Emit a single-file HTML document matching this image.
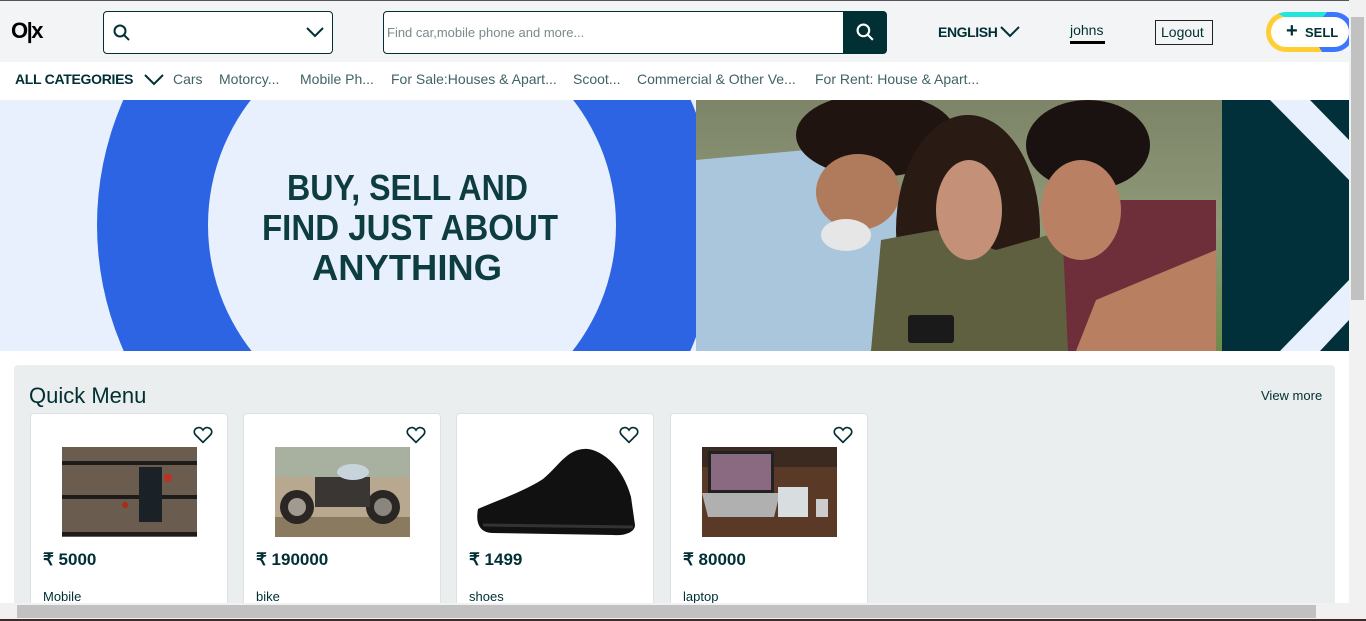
<!DOCTYPE html>
<html><head><meta charset="utf-8"><style>
*{box-sizing:border-box;margin:0;padding:0}
body{width:1366px;height:621px;overflow:hidden;background:#fff;font-family:"Liberation Sans",sans-serif;position:relative;color:#002f34}
.abs{position:absolute}
#hdr{left:0;top:0;width:1349px;height:62px;background:#f2f4f5;border-top:1px solid #555}
.ta{font-size:14px;color:#002f34}
.card{position:absolute;top:413px;width:198px;height:200px;background:#fff;border:1px solid #dde1e2;border-radius:4px}
.card .price{position:absolute;left:12px;top:136px;font-size:17px;font-weight:bold;color:#002f34}
.card .nm{position:absolute;left:12px;top:175px;font-size:13px;color:#002f34}
.card svg.h{position:absolute;right:14px;top:12px}
.card .img{position:absolute;left:31px;top:33px;width:135px;height:90px}
</style></head><body>
<div id="hdr" class="abs">
  <div class="abs" style="left:11px;top:17px;font-weight:900;font-size:22px;letter-spacing:-1.5px;color:#000">O|x</div>
  <div class="abs" style="left:103px;top:10px;width:230px;height:43px;border:1px solid #002f34;border-radius:4px;background:#fff">
    <svg class="abs" style="left:9px;top:12px" width="18" height="18" viewBox="0 0 18 18"><circle cx="7" cy="7" r="5.5" fill="none" stroke="#002f34" stroke-width="2"/><line x1="11" y1="11" x2="16" y2="16" stroke="#002f34" stroke-width="2"/></svg>
    <svg class="abs" style="left:202px;top:14px" width="18" height="12" viewBox="0 0 18 12"><path d="M1 2 L9 10 L17 2" fill="none" stroke="#002f34" stroke-width="2"/></svg>
  </div>
  <div class="abs" style="left:383px;top:10px;width:461px;height:43px;border:1px solid #002f34;border-radius:4px 0 0 4px;background:#fff;font-size:13px;color:#7a8a8c;padding:13px 3px">Find car,mobile phone and more...</div>
  <div class="abs" style="left:843px;top:10px;width:44px;height:43px;background:#002f34;border-radius:0 4px 4px 0">
    <svg class="abs" style="left:13px;top:12px" width="19" height="19" viewBox="0 0 18 18"><circle cx="7" cy="7" r="5.5" fill="none" stroke="#fff" stroke-width="2"/><line x1="11" y1="11" x2="16" y2="16" stroke="#fff" stroke-width="2"/></svg>
  </div>
  <div class="abs" style="left:938px;top:23px;font-size:14px;font-weight:bold;letter-spacing:-0.4px">ENGLISH</div>
  <svg class="abs" style="left:1000px;top:24px" width="20" height="13" viewBox="0 0 20 13"><path d="M1 2 L10 11 L19 2" fill="none" stroke="#002f34" stroke-width="2"/></svg>
  <div class="abs" style="left:1070px;top:21px;font-size:14px;color:#002f34">johns</div>
  <div class="abs" style="left:1070px;top:40px;width:35px;height:3px;background:#000"></div>
  <div class="abs" style="left:1155px;top:19px;width:58px;height:25px;border:1px solid #222;font-size:14px;padding:3px 5px">Logout</div>
  <div class="abs" style="left:1266px;top:11px;width:88px;height:40px;border-radius:20px;background:conic-gradient(from 300deg,#23e5db 0 28%,#3a77ff 28% 58%,#ffce32 58% 100%)"></div>
  <div class="abs" style="left:1271px;top:16px;width:78px;height:30px;border-radius:15px;background:#fff"></div>
  <div class="abs" style="left:1286px;top:19px;font-size:20px;font-weight:bold">+</div>
  <div class="abs" style="left:1305px;top:24px;font-size:13px;font-weight:bold">SELL</div>
</div>
<div class="abs" style="left:15px;top:71px;font-size:14px;font-weight:bold;letter-spacing:-0.3px">ALL CATEGORIES</div>
<svg class="abs" style="left:144px;top:73px" width="20" height="13" viewBox="0 0 20 13"><path d="M1 2 L10 11 L19 2" fill="none" stroke="#002f34" stroke-width="2"/></svg>
<div class="abs ta" style="left:173px;top:71px;color:#406367">Cars</div>
<div class="abs ta" style="left:219px;top:71px;color:#406367">Motorcy...</div>
<div class="abs ta" style="left:300px;top:71px;color:#406367">Mobile Ph...</div>
<div class="abs ta" style="left:391px;top:71px;color:#406367">For Sale:Houses &amp; Apart...</div>
<div class="abs ta" style="left:573px;top:71px;color:#406367">Scoot...</div>
<div class="abs ta" style="left:637px;top:71px;color:#406367">Commercial &amp; Other Ve...</div>
<div class="abs ta" style="left:815px;top:71px;color:#406367">For Rent: House &amp; Apart...</div>

<svg class="abs" style="left:0;top:100px" width="1349" height="251" viewBox="0 0 1349 251">
  <rect width="696" height="251" fill="#e8f0fd"/>
  <circle cx="407" cy="125" r="310" fill="#2c64e3"/>
  <circle cx="412" cy="125" r="204" fill="#e8f0fd"/>
  <g font-family="Liberation Sans" font-weight="900" fill="#0d3d40" font-size="36">
    <text x="287" y="100" textLength="241" lengthAdjust="spacingAndGlyphs">BUY, SELL AND</text>
    <text x="262" y="140" textLength="296" lengthAdjust="spacingAndGlyphs">FIND JUST ABOUT</text>
    <text x="312" y="180" textLength="190" lengthAdjust="spacingAndGlyphs">ANYTHING</text>
  </g>
  <defs><linearGradient id="bg" x1="0" y1="0" x2="0" y2="1"><stop offset="0" stop-color="#7d8468"/><stop offset="0.5" stop-color="#8e9a78"/><stop offset="1" stop-color="#6f8a4a"/></linearGradient></defs>
  <g transform="translate(696,0)">
    <rect width="526" height="251" fill="url(#bg)"/>
    <polygon points="0,60 110,50 200,90 215,251 0,251" fill="#a9c6dc"/>
    <ellipse cx="180" cy="35" rx="80" ry="42" fill="#1f1410"/>
    <ellipse cx="162" cy="92" rx="42" ry="38" fill="#b07a5c"/>
    <ellipse cx="150" cy="135" rx="25" ry="16" fill="#e6e6e6"/>
    <ellipse cx="272" cy="130" rx="72" ry="115" fill="#2a1a14"/>
    <polygon points="185,140 240,130 300,150 370,130 380,251 175,251" fill="#5e6040"/>
    <ellipse cx="273" cy="110" rx="33" ry="50" fill="#c49078"/>
    <polygon points="365,100 520,100 520,251 372,251" fill="#6e2e3a"/>
    <ellipse cx="392" cy="45" rx="62" ry="45" fill="#1a1210"/>
    <ellipse cx="385" cy="110" rx="40" ry="50" fill="#b98063"/>
    <polygon points="400,200 520,150 520,251 380,251" fill="#b88060"/>
    <rect x="212" y="215" width="46" height="28" rx="3" fill="#1a1a1a"/>
  </g>
  <rect x="1222" width="127" height="251" fill="#02303a"/>
  <polygon points="1270,0 1310,0 1349,40 1349,80" fill="#e8f0fd"/>
  <polygon points="1349,180 1349,220 1320,251 1280,251" fill="#e8f0fd"/>
</svg>

<div class="abs" style="left:14px;top:365px;width:1321px;height:250px;background:#ebeeef;border-radius:4px"></div>
<div class="abs" style="left:29px;top:383px;font-size:22px;color:#002f34">Quick Menu</div>
<div class="abs" style="left:1261px;top:388px;font-size:13px;color:#002f34">View more</div>

<div class="card" style="left:30px">
  <svg class="h" width="20" height="18" viewBox="0 0 24 22"><path d="M12 20 L3 11 C0 8 1 3 6 2 C9 1.5 11 3.5 12 5 C13 3.5 15 1.5 18 2 C23 3 24 8 21 11 Z" fill="none" stroke="#002f34" stroke-width="2"/></svg>
  <svg class="img" viewBox="0 0 135 90"><rect width="135" height="90" fill="#6a5d50"/><rect y="14" width="135" height="4" fill="#1e1c1a"/><rect y="48" width="135" height="4" fill="#1e1c1a"/><rect y="85" width="135" height="4" fill="#1e1c1a"/><rect x="77" y="20" width="23" height="55" fill="#1a2228"/><circle cx="106" cy="31" r="4" fill="#c03020"/><circle cx="63" cy="58" r="3" fill="#b02818"/></svg>
  <div class="price">₹ 5000</div><div class="nm">Mobile</div>
</div>
<div class="card" style="left:243px">
  <svg class="h" width="20" height="18" viewBox="0 0 24 22"><path d="M12 20 L3 11 C0 8 1 3 6 2 C9 1.5 11 3.5 12 5 C13 3.5 15 1.5 18 2 C23 3 24 8 21 11 Z" fill="none" stroke="#002f34" stroke-width="2"/></svg>
  <svg class="img" viewBox="0 0 135 90"><rect width="135" height="90" fill="#b8a890"/><rect width="135" height="30" fill="#a8b0a0"/><rect y="70" width="135" height="20" fill="#8a7a60"/><circle cx="22" cy="60" r="17" fill="#2a2624"/><circle cx="22" cy="60" r="9" fill="#a09a90"/><circle cx="108" cy="60" r="17" fill="#2a2624"/><circle cx="108" cy="60" r="9" fill="#8a857f"/><rect x="40" y="30" width="55" height="30" fill="#3a3634"/><ellipse cx="78" cy="25" rx="16" ry="8" fill="#c8d4dc"/></svg>
  <div class="price">₹ 190000</div><div class="nm">bike</div>
</div>
<div class="card" style="left:456px">
  <svg class="h" width="20" height="18" viewBox="0 0 24 22"><path d="M12 20 L3 11 C0 8 1 3 6 2 C9 1.5 11 3.5 12 5 C13 3.5 15 1.5 18 2 C23 3 24 8 21 11 Z" fill="none" stroke="#002f34" stroke-width="2"/></svg>
  <svg class="img" style="left:16px;width:165px" viewBox="0 0 165 90"><path d="M5 62 C20 55 50 45 70 32 C85 20 95 0 115 2 C130 4 150 20 158 50 L162 78 C162 86 150 89 140 88 L20 86 C8 86 2 78 5 62 Z" fill="#111"/><path d="M10 78 L160 80" stroke="#333" stroke-width="3"/></svg>
  <div class="price">₹ 1499</div><div class="nm">shoes</div>
</div>
<div class="card" style="left:670px">
  <svg class="h" width="20" height="18" viewBox="0 0 24 22"><path d="M12 20 L3 11 C0 8 1 3 6 2 C9 1.5 11 3.5 12 5 C13 3.5 15 1.5 18 2 C23 3 24 8 21 11 Z" fill="none" stroke="#002f34" stroke-width="2"/></svg>
  <svg class="img" viewBox="0 0 135 90"><rect width="135" height="90" fill="#5a3a26"/><rect width="135" height="20" fill="#3a2a20"/><rect x="6" y="4" width="66" height="42" fill="#222"/><rect x="9" y="7" width="60" height="36" fill="#8a6a80"/><polygon points="0,46 78,46 72,70 6,70" fill="#b0b0b0"/><rect x="76" y="40" width="30" height="30" fill="#d8dde0"/><rect x="114" y="52" width="12" height="18" fill="#ccc"/></svg>
  <div class="price">₹ 80000</div><div class="nm">laptop</div>
</div>

<div class="abs" style="left:1349px;top:0;width:17px;height:621px;background:#f1f1f1"></div>
<div class="abs" style="left:1351px;top:17px;width:13px;height:283px;background:#c1c1c1"></div>
<div class="abs" style="left:0;top:603px;width:1349px;height:18px;background:#f1f1f1"></div>
<div class="abs" style="left:17px;top:605px;width:1299px;height:13px;background:#c1c1c1"></div>
<div class="abs" style="left:0;top:619px;width:1366px;height:2px;background:#3a2a2a"></div>
</body></html>
